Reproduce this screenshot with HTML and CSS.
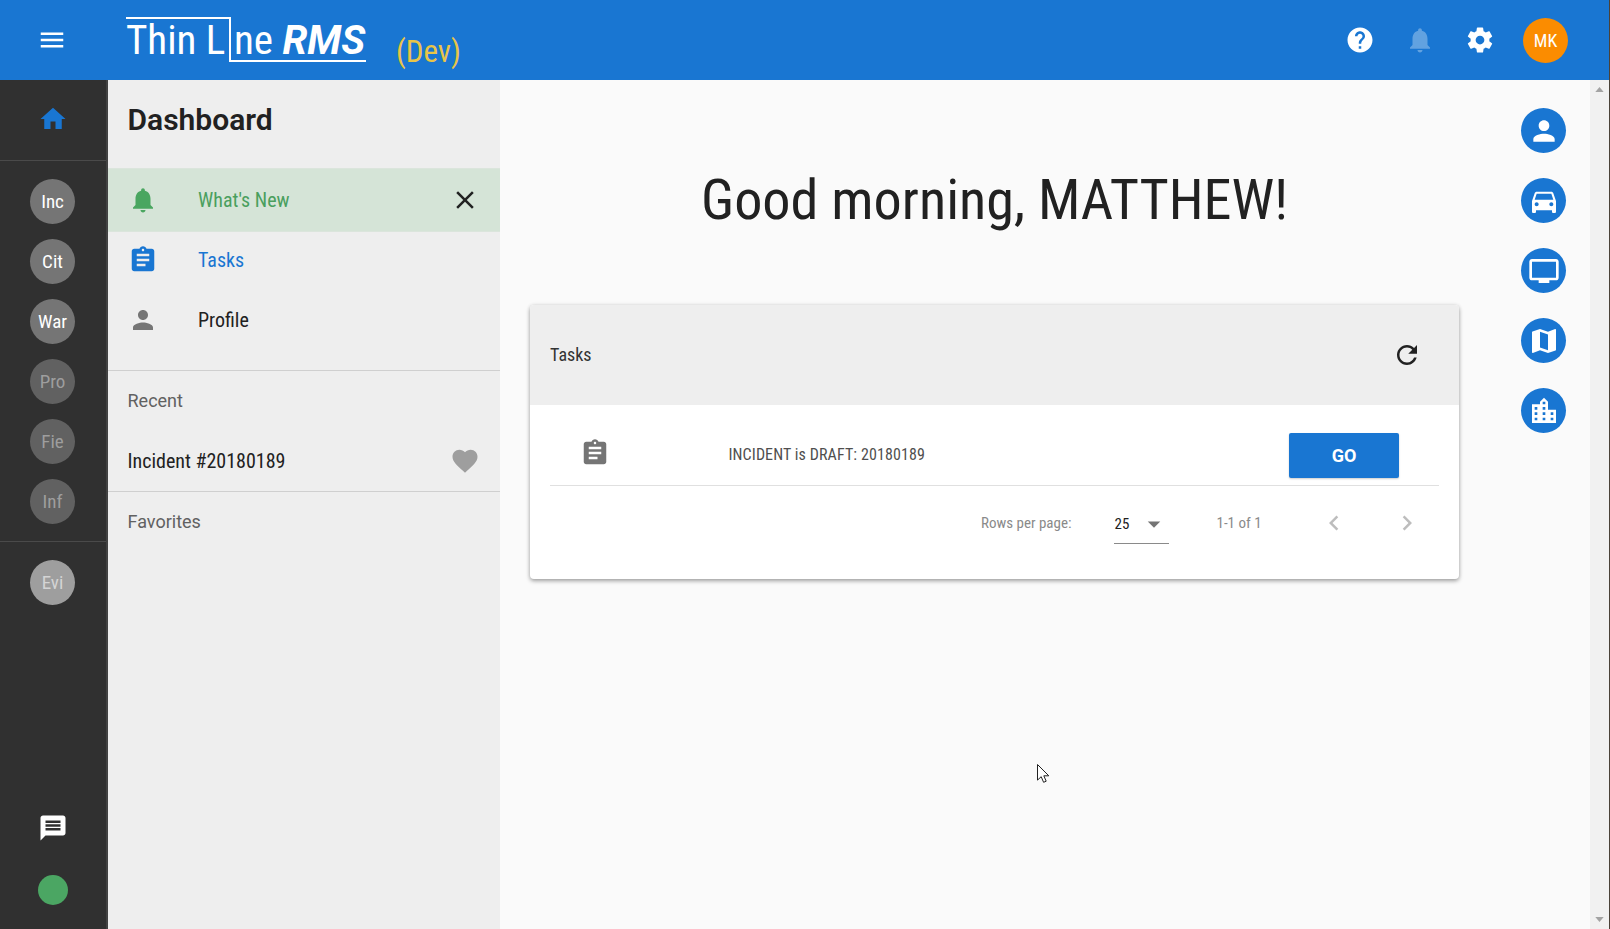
FILE: index.html
```html
<!DOCTYPE html>
<html lang="en">
<head>
<meta charset="utf-8">
<title>Thin Line RMS</title>
<link rel="stylesheet" href="styles.css">
</head>
<body>
<header class="topbar">
  <button class="menu-btn"><svg class="ic30 white" viewBox="0 0 24 24"><path d="M3 18h18v-2H3v2zm0-5h18v-2H3v2zm0-7v2h18V6H3z"/></svg></button>
  <div class="logo"><span class="logo-a">Thin L</span><span class="logo-b">ne <b>RMS</b></span></div>
  <div class="dev">(Dev)</div>
  <div class="top-actions">
    <svg class="ic30 white" viewBox="0 0 24 24"><path d="M12 2C6.48 2 2 6.48 2 12s4.48 10 10 10 10-4.48 10-10S17.52 2 12 2zm1 17h-2v-2h2v2zm2.07-7.75l-.9.92C13.45 12.9 13 13.5 13 15h-2v-.5c0-1.1.45-2.1 1.17-2.83l1.24-1.26c.37-.36.59-.86.59-1.41 0-1.1-.9-2-2-2s-2 .9-2 2H8c0-2.21 1.79-4 4-4s4 1.79 4 4c0 .88-.36 1.68-.93 2.25z"/></svg>
    <svg class="ic30 dim-white" viewBox="0 0 24 24"><path d="M12 22c1.1 0 2-.9 2-2h-4c0 1.1.89 2 2 2zm6-6v-5c0-3.07-1.64-5.64-4.5-6.32V4c0-.83-.67-1.5-1.5-1.5s-1.5.67-1.5 1.5v.68C7.63 5.36 6 7.92 6 11v5l-2 2v1h16v-1l-2-2z"/></svg>
    <svg class="ic30 white" viewBox="0 0 24 24"><path d="M19.43 12.98c.04-.32.07-.64.07-.98s-.03-.66-.07-.98l2.11-1.65c.19-.15.24-.42.12-.64l-2-3.46c-.12-.22-.39-.3-.61-.22l-2.49 1c-.52-.4-1.08-.73-1.69-.98l-.38-2.65C14.46 2.18 14.25 2 14 2h-4c-.25 0-.46.18-.49.42l-.38 2.65c-.61.25-1.17.59-1.69.98l-2.49-1c-.23-.09-.49 0-.61.22l-2 3.46c-.13.22-.07.49.12.64l2.11 1.65c-.04.32-.07.65-.07.98s.03.66.07.98l-2.11 1.65c-.19.15-.24.42-.12.64l2 3.46c.12.22.39.3.61.22l2.49-1c.52.4 1.08.73 1.69.98l.38 2.65c.03.24.24.42.49.42h4c.25 0 .46-.18.49-.42l.38-2.65c.61-.25 1.17-.59 1.69-.98l2.49 1c.23.09.49 0 .61-.22l2-3.46c.12-.22.07-.49-.12-.64l-2.11-1.65zM12 15.5c-1.93 0-3.5-1.57-3.5-3.5s1.57-3.5 3.5-3.5 3.5 1.57 3.5 3.5-1.57 3.5-3.5 3.5z"/></svg>
    <div class="avatar">MK</div>
  </div>
</header>

<div class="body-row">
  <nav class="rail">
    <div class="rail-home"><svg class="ic30 blue" viewBox="0 0 24 24"><path d="M10 20v-6h4v6h5v-8h3L12 3 2 12h3v8z"/></svg></div>
    <div class="rail-group">
      <div class="chip">Inc</div>
      <div class="chip">Cit</div>
      <div class="chip">War</div>
      <div class="chip off">Pro</div>
      <div class="chip off">Fie</div>
      <div class="chip off">Inf</div>
    </div>
    <div class="rail-group rail-group-last">
      <div class="chip evi">Evi</div>
    </div>
    <div class="rail-bottom">
      <svg class="ic30 white" viewBox="0 0 24 24"><path d="M20 2H4c-1.1 0-1.99.9-1.99 2L2 22l4-4h14c1.1 0 2-.9 2-2V4c0-1.1-.9-2-2-2zm-2 12H6v-2h12v2zm0-3H6V9h12v2zm0-3H6V6h12v2z"/></svg>
      <div class="status-dot"></div>
    </div>
  </nav>

  <aside class="panel">
    <h1 class="panel-title">Dashboard</h1>
    <div class="nav-item active">
      <svg class="ic30 green" viewBox="0 0 24 24"><path d="M12 22c1.1 0 2-.9 2-2h-4c0 1.1.89 2 2 2zm6-6v-5c0-3.07-1.64-5.64-4.5-6.32V4c0-.83-.67-1.5-1.5-1.5s-1.5.67-1.5 1.5v.68C7.63 5.36 6 7.92 6 11v5l-2 2v1h16v-1l-2-2z"/></svg>
      <span class="nav-label">What's New</span>
      <svg class="ic30 dark nav-end" viewBox="0 0 24 24"><path d="M19 6.41L17.59 5 12 10.59 6.41 5 5 6.41 10.59 12 5 17.59 6.41 19 12 13.41 17.59 19 19 17.59 13.41 12z"/></svg>
    </div>
    <div class="nav-item tasks">
      <svg class="ic30 blue" viewBox="0 0 24 24"><path d="M19 3h-4.18C14.4 1.84 13.3 1 12 1c-1.3 0-2.4.84-2.82 2H5c-1.1 0-2 .9-2 2v14c0 1.1.9 2 2 2h14c1.1 0 2-.9 2-2V5c0-1.1-.9-2-2-2zm-7 0c.55 0 1 .45 1 1s-.45 1-1 1-1-.45-1-1 .45-1 1-1zm2 14H7v-2h7v2zm3-4H7v-2h10v2zm0-4H7V7h10v2z"/></svg>
      <span class="nav-label">Tasks</span>
    </div>
    <div class="nav-item profile">
      <svg class="ic30 grey" viewBox="0 0 24 24"><path d="M12 12c2.21 0 4-1.79 4-4s-1.79-4-4-4-4 1.79-4 4 1.79 4 4 4zm0 2c-2.67 0-8 1.34-8 4v2h16v-2c0-2.66-5.33-4-8-4z"/></svg>
      <span class="nav-label">Profile</span>
    </div>
    <section class="panel-section recent">
      <div class="section-title">Recent</div>
      <div class="recent-item">
        <span>Incident #20180189</span>
        <svg class="ic30 heart" viewBox="0 0 24 24"><path d="M12 21.35l-1.45-1.32C5.4 15.36 2 12.28 2 8.5 2 5.42 4.42 3 7.5 3c1.74 0 3.41.81 4.5 2.09C13.09 3.81 14.76 3 16.5 3 19.58 3 22 5.42 22 8.5c0 3.78-3.4 6.86-8.55 11.54L12 21.35z"/></svg>
      </div>
    </section>
    <section class="panel-section">
      <div class="section-title">Favorites</div>
    </section>
  </aside>

  <main class="content">
    <div class="content-center">
      <h2 class="greeting">Good morning, MATTHEW!</h2>
      <div class="card">
        <div class="card-head">
          <span class="card-title">Tasks</span>
          <svg class="ic30 dark" viewBox="0 0 24 24"><path d="M17.65 6.35C16.2 4.9 14.21 4 12 4c-4.42 0-7.99 3.58-7.99 8s3.57 8 7.99 8c3.73 0 6.84-2.55 7.73-6h-2.08c-.82 2.33-3.04 4-5.65 4-3.31 0-6-2.69-6-6s2.69-6 6-6c1.66 0 3.14.69 4.22 1.78L13 11h7V4l-2.35 2.35z"/></svg>
        </div>
        <div class="task-row">
          <svg class="ic30 grey" viewBox="0 0 24 24"><path d="M19 3h-4.18C14.4 1.84 13.3 1 12 1c-1.3 0-2.4.84-2.82 2H5c-1.1 0-2 .9-2 2v14c0 1.1.9 2 2 2h14c1.1 0 2-.9 2-2V5c0-1.1-.9-2-2-2zm-7 0c.55 0 1 .45 1 1s-.45 1-1 1-1-.45-1-1 .45-1 1-1zm2 14H7v-2h7v2zm3-4H7v-2h10v2zm0-4H7V7h10v2z"/></svg>
          <span class="task-text">INCIDENT is DRAFT: 20180189</span>
          <button class="go-btn">GO</button>
        </div>
        <div class="pager">
          <span class="pager-label">Rows per page:</span>
          <div class="pager-select"><span>25</span><svg class="ic30 mid" viewBox="0 0 24 24"><path d="M7 10l5 5 5-5z"/></svg></div>
          <span class="pager-count">1-1 of 1</span>
          <svg class="ic30 faint chev-prev" viewBox="0 0 24 24"><path d="M15.41 7.41L14 6l-6 6 6 6 1.41-1.41L10.83 12z"/></svg>
          <svg class="ic30 faint chev-next" viewBox="0 0 24 24"><path d="M10 6L8.59 7.41 13.17 12l-4.58 4.59L10 18l6-6z"/></svg>
        </div>
      </div>
    </div>
    <div class="fabs">
      <div class="fab"><svg class="ic32 white" viewBox="0 0 24 24"><path d="M12 12c2.21 0 4-1.79 4-4s-1.79-4-4-4-4 1.79-4 4 1.79 4 4 4zm0 2c-2.67 0-8 1.34-8 4v2h16v-2c0-2.66-5.33-4-8-4z"/></svg></div>
      <div class="fab"><svg class="ic32 white" viewBox="0 0 24 24"><path d="M18.92 6.01C18.72 5.42 18.16 5 17.5 5h-11c-.66 0-1.21.42-1.42 1.01L3 12v8c0 .55.45 1 1 1h1c.55 0 1-.45 1-1v-1h12v1c0 .55.45 1 1 1h1c.55 0 1-.45 1-1v-8l-2.08-5.99zM6.5 16c-.83 0-1.5-.67-1.5-1.5S5.67 13 6.5 13s1.5.67 1.5 1.5S7.33 16 6.5 16zm11 0c-.83 0-1.5-.67-1.5-1.5s.67-1.5 1.5-1.5 1.5.67 1.5 1.5-.67 1.5-1.5 1.5zM5 11l1.5-4.5h11L19 11H5z"/></svg></div>
      <div class="fab"><svg class="ic32 white" viewBox="0 0 24 24"><path d="M21 3H3c-1.1 0-2 .9-2 2v12c0 1.1.9 2 2 2h5v2h8v-2h5c1.1 0 1.99-.9 1.99-2L23 5c0-1.1-.9-2-2-2zm0 14H3V5h18v12z"/></svg></div>
      <div class="fab"><svg class="ic32 white" viewBox="0 0 24 24"><path d="M20.5 3l-.16.03L15 5.1 9 3 3.36 4.9c-.21.07-.36.25-.36.48V20.5c0 .28.22.5.5.5l.16-.03L9 18.9l6 2.1 5.64-1.9c.21-.07.36-.25.36-.48V3.5c0-.28-.22-.5-.5-.5zM15 19l-6-2.11V5l6 2.11V19z"/></svg></div>
      <div class="fab"><svg class="ic32 white" viewBox="0 0 24 24"><path d="M15 11V5l-3-3-3 3v2H3v14h18V11h-6zm-8 8H5v-2h2v2zm0-4H5v-2h2v2zm0-4H5V9h2v2zm6 8h-2v-2h2v2zm0-4h-2v-2h2v2zm0-4h-2V9h2v2zm0-4h-2V5h2v2zm6 12h-2v-2h2v2zm0-4h-2v-2h2v2z"/></svg></div>
    </div>
    <svg class="cursor" viewBox="0 0 12 20"><path d="M.5.5v15.6l3.7-3.4 2.4 5.6 2.6-1.1-2.4-5.4h5z" fill="#fff" stroke="#222" stroke-width="1"/></svg>
  </main>

  <div class="scrollbar">
    <svg class="sb-arrow" viewBox="0 0 10 6"><path d="M5 0l5 6H0z"/></svg>
    <svg class="sb-arrow" viewBox="0 0 10 6"><path d="M5 6l5-6H0z"/></svg>
  </div>
</div>
</body>
</html>
```
FILE: styles.css
```css
* { box-sizing: border-box; }
html, body { margin: 0; height: 100%; overflow: hidden; }
body {
  display: flex;
  flex-direction: column;
  width: 1610px;
  height: 929px;
  font-family: "Roboto", "Liberation Sans", sans-serif;
  font-stretch: 75%;
  color: #212121;
  background: #fafafa;
  border-right: 1px solid #4a4238;
}
svg { display: block; flex: none; fill: currentColor; }
.ic30 { width: 30px; height: 30px; }
.ic32 { width: 32px; height: 32px; }
.white { color: #fff; }
.dim-white { color: rgba(255,255,255,.32); }
.blue { color: #1976d2; }
.green { color: #4aa660; }
.dark { color: #212121; }
.grey { color: #757575; }
.heart { color: #9e9e9e; }
.mid { color: #757575; }
.faint { color: #bdbdbd; }

.topbar {
  flex: none;
  height: 80px;
  background: #1976d2;
  display: flex;
  align-items: center;
  padding-left: 37px;
}
.menu-btn { border: 0; padding: 0; background: none; margin-right: 59px; }
.logo {
  display: flex;
  align-items: flex-end;
  height: 45px;
  margin-top: -1px;
  color: #fff;
  font-weight: 380;
  font-size: 41px;
  line-height: 40px;
}
.logo-a {
  display: block;
  width: 105px;
  height: 45px;
  border-top: 2px solid #fff;
  border-right: 2px solid #fff;
  padding-top: 1px;
  white-space: nowrap;
}
.logo-b {
  display: block;
  width: 135px;
  height: 42px;
  border-bottom: 2px solid #fff;
  white-space: nowrap;
  padding-left: 3px;
}
.logo-b b { font-weight: 700; font-style: italic; font-stretch: 100%; font-size: 40px; }
.dev { color: #e8c547; font-size: 31px; font-weight: 400; margin: 22px 0 0 30px; }
.top-actions { margin-left: auto; display: flex; align-items: center; gap: 30px; padding-right: 41px; }
.avatar {
  width: 45px; height: 45px; border-radius: 50%;
  background: #fb8c00; color: #fff;
  display: flex; align-items: center; justify-content: center;
  font-size: 18px; margin-left: -2px;
}

.body-row { flex: 1; display: flex; min-height: 0; }

.rail {
  flex: none;
  width: 108px;
  background: #303030;
  border-right: 2px solid #424242;
  display: flex;
  flex-direction: column;
  align-items: stretch;
}
.rail-home { height: 81px; display: flex; align-items: center; justify-content: center; border-bottom: 1px solid #4a4a4a; padding: 0 1px 2px 0; }
.rail-group { display: flex; flex-direction: column; align-items: center; gap: 15px; padding: 18px 1px 17px 0; border-bottom: 1px solid #4a4a4a; }
.rail-group-last { border-bottom: 0; }
.chip {
  width: 45px; height: 45px; border-radius: 50%;
  background: #757575; color: #fff;
  display: flex; align-items: center; justify-content: center;
  font-size: 19px; font-weight: 400;
}
.chip.off { background: #616161; color: #9e9e9e; }
.chip.evi { background: #9e9e9e; color: #d4d4d4; }
.rail-bottom { margin-top: auto; display: flex; flex-direction: column; align-items: center; gap: 32px; padding: 0 1px 24px 0; }
.status-dot { width: 30px; height: 30px; border-radius: 50%; background: #4ba663; }

.panel { flex: none; width: 392px; background: #eee; }
.panel-title { margin: 0; height: 88px; padding: 21px 0 0 19.5px; font-size: 30px; line-height: 38px; font-weight: 600; font-stretch: 100%; }
.nav-item { height: 60px; display: flex; align-items: center; padding-left: 20px; font-size: 20px; }
.nav-label { margin-left: 40px; margin-top: -1px; }
.nav-end { margin-left: auto; margin-right: 20px; }
.nav-item.active { height: 64px; background: #d5e4d7; border-top: 1px solid #dbe5dc; border-bottom: 1px solid #dbe5dc; color: #4a9f5e; }
.nav-item.tasks { color: #1976d2; margin-top: -2px; }
.panel-section { padding: 0 20px 0 19.5px; }
.recent { border-top: 1px solid #cfcfcf; border-bottom: 1px solid #cfcfcf; margin-top: 20px; }
.section-title { color: #616161; font-size: 18px; font-stretch: 100%; height: 60px; padding-bottom: 2px; display: flex; align-items: center; }
.recent-item { display: flex; align-items: center; justify-content: space-between; height: 60px; font-size: 20px; }

.content { flex: 1; position: relative; display: flex; min-width: 0; }
.content-center { width: 989px; padding-left: 30px; padding-right: 30px; }
.greeting { margin: 0; height: 225px; padding-top: 85px; text-align: center; font-size: 56.2px; line-height: 70px; font-weight: 400; }
.card { width: 929px; height: 274px; background: #fff; border-radius: 4px; box-shadow: 0 2px 4px rgba(0,0,0,.35), 0 0 4px rgba(0,0,0,.08); overflow: hidden; }
.card-head { height: 100px; background: #eee; display: flex; align-items: center; justify-content: space-between; padding: 0 37px 0 20px; font-size: 18px; }
.card-title { padding-bottom: 1px; color: #333; }
.task-row { height: 81px; margin: 0 20px; border-bottom: 1px solid #e0e0e0; display: flex; align-items: center; padding: 18px 40px 0 30px; }
.task-row .ic30 { margin-top: -3px; }
.task-text { margin-left: 118.5px; font-size: 16px; letter-spacing: .1px; color: #4f4f4f; }
.go-btn { margin-left: auto; margin-top: 2px; width: 110px; height: 45px; background: #1976d2; color: #fff; border: 0; border-radius: 2px; font: inherit; font-stretch: 100%; font-weight: 700; font-size: 18px; box-shadow: 0 1px 2px rgba(0,0,0,.2); }
.pager { height: 74px; display: flex; align-items: center; padding-left: 451px; font-size: 15px; color: #8a8a8a; }
.pager-select { width: 55px; height: 39px; margin-left: 43px; border-bottom: 1px solid #8a8a8a; display: flex; align-items: center; color: #212121; font-size: 15px; margin-top: 2px; }
.pager-select .ic30 { margin-left: 10px; }
.pager-count { margin-left: 47px; font-size: 15px; }
.chev-prev { margin-left: 57px; }
.chev-next { margin-left: 43px; }

.fabs { flex: none; display: flex; flex-direction: column; align-items: center; gap: 25px; padding: 28px 0 0 0; width: 45px; margin-left: 32px; }
.fab { width: 45px; height: 45px; border-radius: 50%; background: #1976d2; display: flex; align-items: center; justify-content: center; }
.cursor { position: absolute; left: 537px; top: 684px; width: 12px; height: 20px; }

.scrollbar { flex: none; width: 19px; background: #f1f1f1; display: flex; flex-direction: column; justify-content: space-between; align-items: center; padding: 7px 0 7px; }
.sb-arrow { width: 9px; height: 5px; fill: #a3a3a3; }
```
